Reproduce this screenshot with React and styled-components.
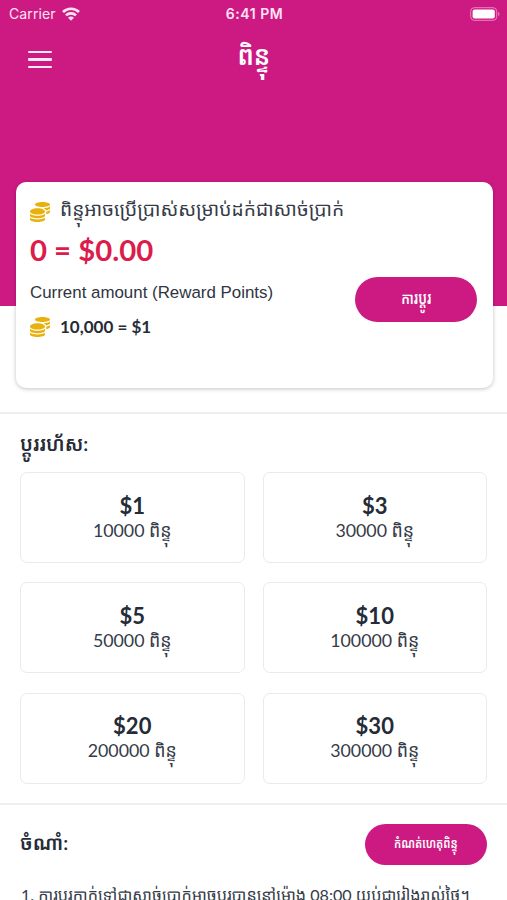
import React from 'react'
import styled, { createGlobalStyle } from 'styled-components'
import { FaCoins } from 'react-icons/fa'

const PINK = '#cd1a83'

const GlobalStyle = createGlobalStyle`
  * {
    box-sizing: border-box;
  }

  body {
    margin: 0;
    background: #ffffff;
    color: #252b37;
    font-family: Lato, 'Noto Sans Khmer', 'Khmer OS', 'Noto Sans', sans-serif;
  }
`

const Screen = styled.div`
  width: 507px;
  height: 900px;
  overflow: hidden;
  display: flex;
  flex-direction: column;
`

const Hero = styled.header`
  height: 306px;
  flex-shrink: 0;
  background: ${PINK};
  color: #ffffff;
`

const StatusBar = styled.div`
  height: 27px;
  padding: 0 7px 0 9px;
  display: grid;
  grid-template-columns: 1fr auto 1fr;
  align-items: center;
  font-family: Inter, sans-serif;
  font-size: 14px;
  color: #ffe3f4;
`

const Carrier = styled.div`
  display: flex;
  align-items: center;
  gap: 6px;
  letter-spacing: .1px;
`

const Clock = styled.div`
  font-weight: 600;
  letter-spacing: .55px;
`

const Battery = styled.svg`
  justify-self: end;
`

const NavBar = styled.div`
  height: 65px;
  padding: 0 28px;
  display: grid;
  grid-template-columns: 1fr auto 1fr;
  align-items: center;
`

const MenuButton = styled.button`
  width: 24px;
  padding: 0;
  border: 0;
  background: transparent;
  display: flex;
  flex-direction: column;
  gap: 5px;
`

const MenuLine = styled.span`
  height: 2.5px;
  border-radius: 1px;
  background: #ffe9f6;
`

const Narrow = styled.span`
  display: inline-block;
  white-space: nowrap;
  transform: scaleX(${({ $ratio }) => $ratio});
`

const Title = styled.h1`
  margin: -9px -8px 0;
  font-size: 27px;
  font-weight: 600;
  line-height: 40px;
`

const BalanceCard = styled.section`
  height: 206px;
  flex-shrink: 0;
  margin: -124.5px 14.5px 0 15.5px;
  padding: 14px 15.5px 14px 14.5px;
  border-radius: 10px;
  background: #ffffff;
  box-shadow: 0 1px 4px rgba(0, 0, 0, .24);
  display: flex;
  justify-content: space-between;
`

const BalanceInfo = styled.div`
  display: flex;
  flex-direction: column;
  white-space: nowrap;
`

const CoinRow = styled.div`
  height: ${({ $height }) => $height}px;
  display: flex;
  align-items: center;
  gap: 10px;
  font-size: ${({ $size }) => $size}px;
  font-weight: ${({ $bold }) => ($bold ? 700 : 400)};

  svg {
    flex-shrink: 0;
    color: #e9b10c;
  }
`

const RowText = styled.span`
  margin-top: -6px;
  color: #353b47;
`

const Amount = styled.div`
  margin-top: 3px;
  font-size: 29.3px;
  line-height: 38px;
  font-weight: 700;
  color: #dc1c4b;
`

const Caption = styled.div`
  margin: 12px 0 10px;
  font-family: 'Liberation Sans', sans-serif;
  font-size: 16.9px;
  line-height: 24px;
  color: #2f3541;
`

const PillButton = styled.button`
  width: ${({ $width }) => $width}px;
  height: ${({ $height }) => $height}px;
  padding: 0 0 4px;
  border: 0;
  border-radius: 23px;
  background: ${PINK};
  color: #ffffff;
  font-family: inherit;
  font-size: ${({ $size }) => $size}px;
  font-weight: 600;
`

const ExchangeSlot = styled.div`
  width: 122px;
  margin-top: 81.5px;
`

const Section = styled.section`
  flex-shrink: 0;
  padding: 0 20px;
  border-top: 2px solid #eeeff1;
`

const QuickSection = styled(Section)`
  height: 391px;
  margin-top: 24.5px;
`

const Heading = styled.h2`
  margin: 0;
  font-size: 19.5px;
  font-weight: 600;
  line-height: 60px;
  height: 58px;
`

const Grid = styled.div`
  display: grid;
  grid-template-columns: 1fr 1fr;
  grid-auto-rows: 91px;
  column-gap: 18px;
  row-gap: 19.3px;
`

const Option = styled.button`
  padding: 0;
  border: 1.5px solid #e9eaec;
  border-radius: 7px;
  background: #ffffff;
  color: inherit;
  font-family: inherit;
  display: flex;
  flex-direction: column;
  align-items: center;
  justify-content: center;
`

const Price = styled.span`
  font-size: 22px;
  line-height: 25px;
  font-weight: 700;
`

const Points = styled.span`
  font-size: 17.8px;
  line-height: 25px;
  color: #353b47;
`

const NotesHeader = styled.div`
  height: 79px;
  display: flex;
  align-items: center;
  justify-content: space-between;

  ${Heading} {
    padding-bottom: 4px;
    line-height: 54px;
  }
`

const Note = styled.p`
  margin: -1px 0 0 1px;
  font-size: 16.15px;
  line-height: 24px;
  white-space: nowrap;
  color: #353b47;
`

const options = [
  { price: '$1', points: 10000 },
  { price: '$3', points: 30000 },
  { price: '$5', points: 50000 },
  { price: '$10', points: 100000 },
  { price: '$20', points: 200000 },
  { price: '$30', points: 300000 },
]

const WifiIcon = () => (
  <svg width="18" height="14" viewBox="0 0 18 14" fill="none" stroke="currentColor" strokeWidth="2.7">
    <path d="M1 5a11.5 11.5 0 0 1 16 0" />
    <path d="M4 8.4a7.2 7.2 0 0 1 10 0" />
    <path d="M9 13.8 6 10.8a4.4 4.4 0 0 1 6 0Z" fill="currentColor" stroke="none" />
  </svg>
)

const BatteryIcon = () => (
  <Battery width="30" height="14" viewBox="0 0 30 14">
    <rect x=".7" y=".7" width="26" height="12.6" rx="3.6" fill="none" stroke="#e986bf" />
    <rect x="2.6" y="2.6" width="22.2" height="8.8" rx="2" fill="#ffffff" />
    <path d="M28.2 4.8c1.7.7 1.7 3.7 0 4.4Z" fill="#e986bf" />
  </Battery>
)

const App = () => (
  <>
    <GlobalStyle />
    <Screen>
      <Hero>
        <StatusBar>
          <Carrier>
            Carrier
            <WifiIcon />
          </Carrier>
          <Clock>6:41 PM</Clock>
          <BatteryIcon />
        </StatusBar>
        <NavBar>
          <MenuButton aria-label="Menu">
            <MenuLine />
            <MenuLine />
            <MenuLine />
          </MenuButton>
          <Title>
            <Narrow $ratio={0.92}>ពិន្ទុ</Narrow>
          </Title>
        </NavBar>
      </Hero>

      <BalanceCard>
        <BalanceInfo>
          <CoinRow $height={32} $size={19.2}>
            <FaCoins size={20} />
            <RowText>ពិន្ទុអាចប្រើប្រាស់សម្រាប់ដក់ជាសាច់ប្រាក់</RowText>
          </CoinRow>
          <Amount>0 = $0.00</Amount>
          <Caption>Current amount (Reward Points)</Caption>
          <CoinRow $height={24} $size={17} $bold>
            <FaCoins size={20} />
            <span>10,000 = $1</span>
          </CoinRow>
        </BalanceInfo>
        <ExchangeSlot>
          <PillButton $width={122} $height={45} $size={16}>
            <Narrow $ratio={0.82}>ការប្តូរ</Narrow>
          </PillButton>
        </ExchangeSlot>
      </BalanceCard>

      <QuickSection>
        <Heading>ប្តូររហ័ស:</Heading>
        <Grid>
          {options.map(({ price, points }) => (
            <Option key={price}>
              <Price>{price}</Price>
              <Points>{points} ពិន្ទុ</Points>
            </Option>
          ))}
        </Grid>
      </QuickSection>

      <Section>
        <NotesHeader>
          <Heading>ចំណាំ:</Heading>
          <PillButton $width={122} $height={41} $size={14}>
            <Narrow $ratio={0.78}>កំណត់ហេតុពិន្ទុ</Narrow>
          </PillButton>
        </NotesHeader>
        <Note>1. ការប្តូរកាក់ទៅជាសាច់ប្រាក់អាចប្តូរបាននៅម៉ោង 08:00 យប់ជារៀងរាល់ថ្ងៃ។</Note>
      </Section>
    </Screen>
  </>
)

export default App
